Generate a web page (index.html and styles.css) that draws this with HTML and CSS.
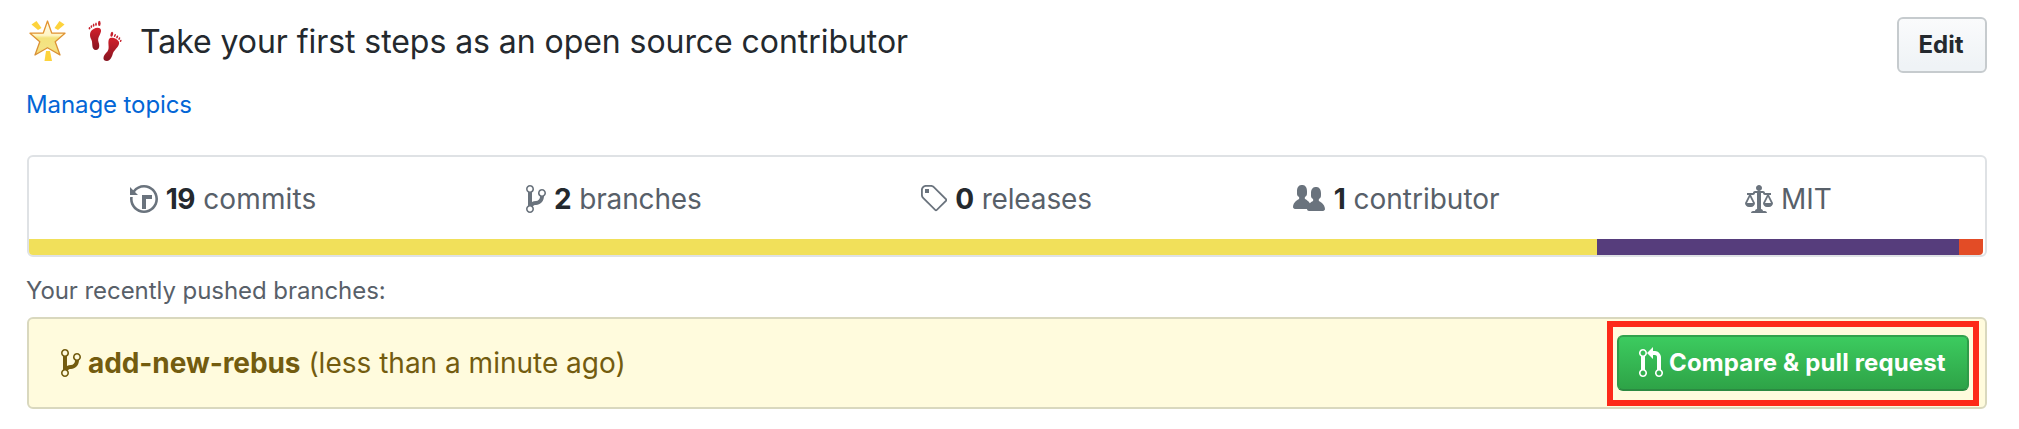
FILE: index.html
```html
<!DOCTYPE html>
<html lang="en">
<head>
<meta charset="utf-8">
<title>Repository overview</title>
<link rel="stylesheet" href="styles.css">
</head>
<body>
<svg width="0" height="0" class="defs">
  <defs>
    <symbol id="branch" viewBox="0 0 10 16"><path fill-rule="evenodd" d="M10 5c0-1.11-.89-2-2-2a1.993 1.993 0 0 0-1 3.72v.3c-.02.52-.23.98-.63 1.38-.4.4-.86.61-1.38.63-.83.02-1.48.16-2 .45V4.72a1.993 1.993 0 0 0-1-3.72C.88 1 0 1.89 0 3a2 2 0 0 0 1 1.72v6.56c-.59.35-1 .99-1 1.72 0 1.11.89 2 2 2 1.11 0 2-.89 2-2 0-.53-.2-1-.53-1.36.09-.06.48-.41.59-.47.25-.11.56-.17.94-.17 1.05-.05 1.95-.45 2.75-1.25S8.95 7.77 9 6.73h-.02C9.59 6.37 10 5.73 10 5zM2 1.8c.66 0 1.2.55 1.2 1.2 0 .65-.55 1.2-1.2 1.2C1.35 4.2.8 3.65.8 3c0-.65.55-1.2 1.2-1.2zm0 12.41c-.66 0-1.2-.55-1.2-1.2 0-.65.55-1.2 1.2-1.2.65 0 1.2.55 1.2 1.2 0 .65-.55 1.2-1.2 1.2zm6-8c-.66 0-1.2-.55-1.2-1.2 0-.65.55-1.2 1.2-1.2.65 0 1.2.55 1.2 1.2 0 .65-.55 1.2-1.2 1.2z"/></symbol>
    <linearGradient id="gold" x1="0" y1="0" x2="0" y2="1"><stop offset="0" stop-color="#fffbe8"/><stop offset=".42" stop-color="#fff5c4"/><stop offset=".5" stop-color="#f3e27c"/><stop offset=".8" stop-color="#f4e385"/><stop offset="1" stop-color="#fbd766"/></linearGradient>
    <linearGradient id="rim" x1="0" y1="0" x2="0" y2="1"><stop offset="0" stop-color="#e5942e"/><stop offset="1" stop-color="#d79036"/></linearGradient>
    <linearGradient id="red" x1="0" y1="0" x2="0" y2="1"><stop offset="0" stop-color="#d3202b"/><stop offset="1" stop-color="#861521"/></linearGradient>
  </defs>
</svg>
<main class="page">
  <header class="header">
    <h1 class="title">
      <svg class="emoji-star" viewBox="0 0 38 43"><g fill="#fdd33c"><path d="M2.500 5.500 7.500 2 12.500 9 9 11z"/><path d="M35.500 5.500 30.500 2 25.500 9 29 11z"/><path d="M17 32h4l2 10h-7.500z"/></g><path d="M18.500 2 22.700 14 36 14.200 26.200 22.700 31 36 18.500 28.700 6 36 10.800 22.700 1 14.200 14.300 14z" fill="url(#gold)" stroke="url(#rim)" stroke-width="1.300" stroke-linejoin="round"/></svg>
      <svg class="emoji-feet" viewBox="0 0 34 43"><g fill="url(#red)"><path d="M2.500 12C4.500 8 12 6 13 10c.5 4-4 7-2.500 12 1.500 4 .8 8-2.500 8-5 0-3-7-4.500-10C2 17 1.500 15 2.500 12z"/><path d="M21 19c2-3 9 0 10 3 1 4-4 7-6 11-1 4-3 8-6 8-5 0-4-5-1-8 5-4 1-9 3-14z"/></g><g fill="#c61f2b"><ellipse cx="11.300" cy="3.400" rx="1.300" ry="2.600"/><ellipse cx="8" cy="4.200" rx=".8" ry="1.800"/><ellipse cx="5.600" cy="5.200" rx=".8" ry="1.600"/><ellipse cx="3.400" cy="6.600" rx=".8" ry="1.400"/><ellipse cx="1.500" cy="8.300" rx=".8" ry="1.300"/><ellipse cx="23.800" cy="14.300" rx="1.300" ry="2.500" transform="rotate(15 23.800 14.300)"/><ellipse cx="26.900" cy="15.500" rx=".8" ry="1.700" transform="rotate(25 26.900 15.500)"/><ellipse cx="29.200" cy="16.900" rx=".8" ry="1.600" transform="rotate(25 29.200 16.900)"/><ellipse cx="31.300" cy="18.600" rx=".8" ry="1.400" transform="rotate(25 31.300 18.600)"/><ellipse cx="32.700" cy="20.800" rx=".8" ry="1.200" transform="rotate(25 32.700 20.800)"/></g></svg>
      <span class="title-text">Take your first steps as an open source contributor</span>
    </h1>
    <button class="btn btn-edit"><span>Edit</span></button>
  </header>
  <a class="topics"><span>Manage topics</span></a>

  <section class="summary">
    <ul class="stats">
      <li class="stat commits"><svg class="icon w14" viewBox="0 0 14 16"><path fill-rule="evenodd" d="M8 13H6V6h5v2H8v5zM7 1C4.810 1 2.870 2.020 1.590 3.590L0 2v4h4L2.500 4.500C3.550 3.170 5.170 2.300 7 2.300c3.140 0 5.700 2.560 5.700 5.700s-2.560 5.700-5.700 5.700A5.710 5.710 0 0 1 1.300 8c0-.34.03-.67.09-1H.08C.03 7.330 0 7.660 0 8c0 3.860 3.140 7 7 7s7-3.140 7-7-3.140-7-7-7z"/></svg><b class="num">19</b><span>commits</span></li>
      <li class="stat branches"><svg class="icon w10"><use href="#branch"/></svg><b class="num">2</b><span>branches</span></li>
      <li class="stat releases"><svg class="icon w14" viewBox="0 0 14 16"><path fill-rule="evenodd" d="M7.730 1.730C7.260 1.260 6.620 1 5.960 1H3.500C2.130 1 1 2.130 1 3.500v2.470c0 .66.27 1.300.73 1.770l6.060 6.060c.39.39 1.020.39 1.410 0l4.590-4.590a.996.996 0 0 0 0-1.410L7.730 1.730zM2.380 7.090c-.31-.3-.47-.7-.47-1.130V3.500c0-.88.72-1.590 1.590-1.590h2.470c.42 0 .83.16 1.130.47l6.140 6.130-4.730 4.730-6.130-6.150zM3.010 3h2v2H3V3h.01z"/></svg><b class="num">0</b><span>releases</span></li>
      <li class="stat contributors"><svg class="icon w16" viewBox="0 0 16 16"><path fill-rule="evenodd" d="M16 12.999c0 .439-.45 1-1 1H7.995c-.539 0-.994-.447-.995-.999H1c-.54 0-1-.561-1-1 0-2.634 3-4 3-4s.229-.409 0-1c-.841-.621-1.058-.59-1-3 .058-2.419 1.367-3 2.500-3s2.442.58 2.500 3c.058 2.410-.159 2.379-1 3-.229.59 0 1 0 1s1.549.711 2.420 2.088C9.196 9.369 10 8.999 10 8.999s.229-.409 0-1c-.841-.62-1.058-.59-1-3 .058-2.419 1.367-3 2.500-3s2.437.581 2.495 3c.059 2.410-.158 2.380-1 3-.229.59 0 1 0 1s3.005 1.366 3.005 4"/></svg><b class="num">1</b><span>contributor</span></li>
      <li class="stat license"><svg class="icon w14" viewBox="0 0 14 16"><path fill-rule="evenodd" d="M7 4c-.83 0-1.500-.67-1.500-1.500S6.170 1 7 1s1.500.67 1.500 1.500S7.830 4 7 4zm7 6c0 1.110-.89 2-2 2h-1c-1.110 0-2-.89-2-2l2-4h-1c-.55 0-1-.45-1-1H8v8c.42 0 1 .45 1 1h1c.42 0 1 .45 1 1H3c0-.55.58-1 1-1h1c0-.55.58-1 1-1h.03L6 5H5c0 .55-.45 1-1 1H3l2 4c0 1.110-.89 2-2 2H2c-1.110 0-2-.89-2-2l2-4H1V5h3c0-.55.45-1 1-1h4c.55 0 1 .45 1 1h3v1h-1l2 4zM2.500 7L1 10h3L2.500 7zM13 10l-1.500-3-1.500 3h3z"/></svg><span class="mit">MIT</span></li>
    </ul>
    <div class="langs"><span class="lang-js"></span><span class="lang-css"></span><span class="lang-html"></span></div>
  </section>

  <h2 class="pushed"><span>Your recently pushed branches:</span></h2>

  <section class="flash">
    <svg class="icon w10"><use href="#branch"/></svg>
    <b class="branch-name">add-new-rebus</b>
    <span class="ago">(less than a minute ago)</span>
    <div class="highlight">
      <button class="btn btn-primary"><svg class="icon w12" viewBox="0 0 12 16"><path fill-rule="evenodd" d="M11 11.280V5c-.03-.78-.34-1.470-.94-2.060C9.460 2.350 8.780 2.030 8 2H7V0L4 3l3 3V4h1c.27.02.48.11.69.31.21.2.3.42.31.69v6.280A1.993 1.993 0 0 0 10 15a1.993 1.993 0 0 0 1-3.720zm-1 2.920c-.66 0-1.200-.55-1.200-1.200 0-.65.55-1.200 1.200-1.200.65 0 1.200.55 1.200 1.200 0 .65-.55 1.200-1.200 1.200zM4 3c0-1.110-.89-2-2-2a1.993 1.993 0 0 0-1 3.720v6.560A1.993 1.993 0 0 0 2 15a1.993 1.993 0 0 0 1-3.720V4.720c.59-.34 1-.98 1-1.720zm-.8 10c0 .66-.55 1.200-1.200 1.200-.65 0-1.200-.55-1.200-1.200 0-.65.55-1.200 1.200-1.200.65 0 1.200.55 1.200 1.200zM2 4.200C1.340 4.200.8 3.650.8 3c0-.65.55-1.200 1.200-1.200.65 0 1.200.55 1.200 1.200 0 .65-.55 1.200-1.200 1.200z"/></svg><span>Compare &amp; pull request</span></button>
    </div>
  </section>
</main>
</body>
</html>
```
FILE: styles.css
```css
* { box-sizing: border-box; }
body { margin: 0; background: #fff; color: #24292e; font-family: Inter, "Liberation Sans", sans-serif; }
.defs { display: block; height: 0; }
.page { height: 429px; padding: 17px 32px 0 27px; display: flex; flex-direction: column; overflow: hidden; white-space: nowrap; }
.icon { height: 32px; fill: currentColor; flex: none; display: block; }
.w10 { width: 20px; }
.w12 { width: 24px; }
.w14 { width: 28px; }
.w16 { width: 32px; }

.header { display: flex; justify-content: space-between; height: 56px; }
.title { margin: 0; display: flex; align-items: flex-start; font-size: 32px; line-height: 50px; font-weight: 400; }
.emoji-star { width: 38px; height: 43px; margin: 2px 0 0 2px; }
.emoji-feet { width: 34px; height: 43px; margin: 3px 0 0 21px; }
.title-text { margin-left: 18px; letter-spacing: -.06px; }

.btn { font-family: inherit; font-size: 24px; font-weight: 700; line-height: 40px; height: 56px; border-radius: 6px; padding: 0; display: flex; align-items: center; }
.btn-edit { width: 90px; justify-content: center; padding-right: 2px; color: #24292e; border: 2px solid #c6cbce; background: linear-gradient(#fafbfc, #eff3f6 90%) padding-box; }
.topics { height: 36px; margin: 14px 0 0 -1px; font-size: 24px; line-height: 36px; letter-spacing: -.1px; color: #0366d6; }

.summary { margin-top: 32px; height: 102px; flex: none; border: 2px solid #dfe2e5; border-radius: 6px; overflow: hidden; }
.stats { margin: 0; padding: 0; list-style: none; height: 82px; display: grid; grid-template-columns: repeat(5, 1fr); }
.stat { display: flex; justify-content: center; align-items: center; font-size: 28px; line-height: 40px; color: #586069; padding: 2px 3px 0 0; }
.stat .icon { color: #6a737d; margin-top: -1px; }
.num { font-weight: 700; color: #24292e; margin: 0 8px; letter-spacing: -.4px; }
.commits { letter-spacing: .15px; }
.branches, .releases { letter-spacing: -.15px; }
.branches { padding-right: 4px; }
.contributors { padding-right: 4px; }
.contributors .num { margin-left: 9px; }
.license { padding-right: 2px; }
.mit { margin-left: 8px; }
.langs { display: flex; height: 16px; padding-right: 2px; }
.lang-js { flex: 1568; background: #f1e05a; }
.lang-css { flex: 362; background: #563d7c; }
.lang-html { flex: 24; background: #e34c26; border-bottom-right-radius: 4px; }

.pushed { margin: 16px 0 8px -1px; height: 36px; font-size: 24px; line-height: 36px; font-weight: 400; letter-spacing: -.06px; color: #586069; flex: none; }
.flash { height: 92px; flex: none; border: 2px solid #d9d8be; border-radius: 6px; background: #fffbdd; display: flex; align-items: center; padding: 0 6px 0 32px; font-size: 28px; line-height: 40px; color: #735c0f; }
.branch-name { font-weight: 700; margin-left: 7px; letter-spacing: -.08px; }
.ago { margin-left: 8px; }
.highlight { margin-left: auto; width: 372px; height: 85px; border: 6px solid #fd2a19; padding: 8px 4px; }
.btn-primary { width: 352px; padding-left: 20px; color: #fff; border: 2px solid; border-color: #31a24c #2f9b49 #2b8a41; background: linear-gradient(#3ccb5f, #2ea347); }
.btn-primary span { margin-left: 6px; letter-spacing: .15px; }
```
